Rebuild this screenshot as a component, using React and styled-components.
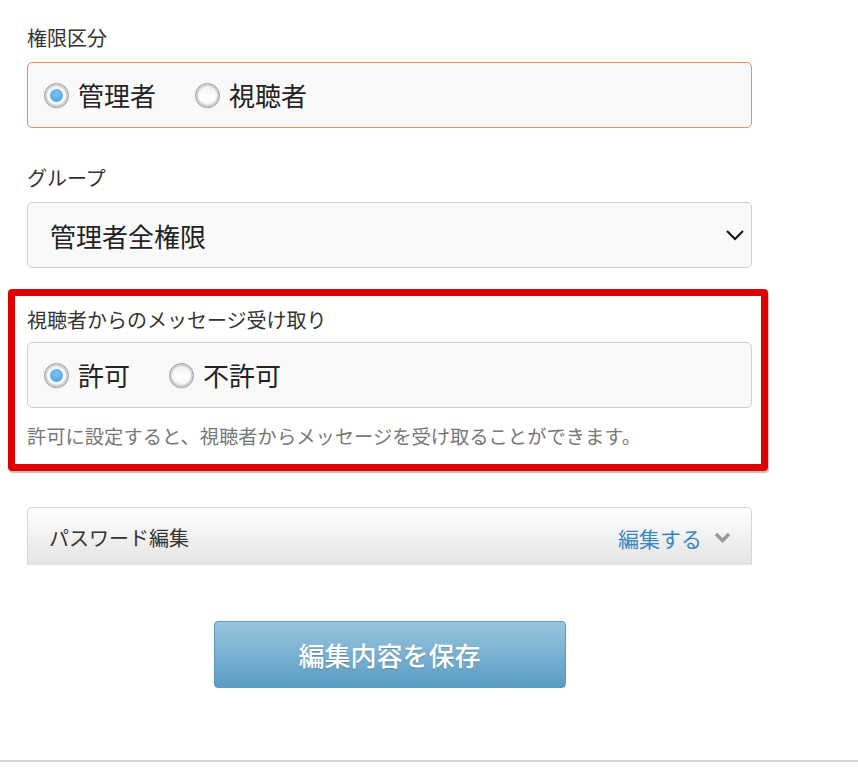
import React, { useState } from 'react';
import styled, { createGlobalStyle } from 'styled-components';

const GlobalStyle = createGlobalStyle`
  body {
    margin: 0;
    background: #fff;
    font-family: "Noto Sans CJK JP", "Noto Sans", sans-serif;
  }
`;

const Page = styled.div`
  width: 100%;
  border-bottom: 2px solid #d6d6d6;
`;

const Form = styled.div`
  width: 725px;
  margin-left: 27px;
  padding: 26px 0 72px;
`;

const Label = styled.div`
  font-size: 20px;
  line-height: 24px;
  color: #333;
  margin-top: ${props => props.top || 0}px;
  margin-bottom: ${props => props.gap || 12}px;
`;

const OptionBox = styled.div`
  box-sizing: border-box;
  height: 66px;
  display: flex;
  align-items: center;
  gap: 39px;
  padding-left: 16px;
  background: #f9f9f9;
  border: 1px solid ${props => props.accent ? '#f08c52' : '#cfcfcf'};
  border-radius: 5px;
`;

const Option = styled.label`
  display: flex;
  align-items: center;
  gap: 9px;
  font-size: 26px;
  line-height: 30px;
  color: #222;
  cursor: pointer;
`;

const RadioCircle = styled.span`
  box-sizing: border-box;
  width: 25px;
  height: 25px;
  border-radius: 50%;
  border: 1px solid #9c9c9c;
  background: linear-gradient(#ececec, #ffffff 55%, #f4f4f4);
  box-shadow: inset 0 0 0 2px #d4d4d4, inset 0 -2px 3px rgba(0, 0, 0, 0.12), 0 1px 1px rgba(0, 0, 0, 0.08);
  display: flex;
  align-items: center;
  justify-content: center;

  &::after {
    content: '';
    width: 13px;
    height: 13px;
    border-radius: 50%;
    background: radial-gradient(circle at 50% 35%, #7cc3f2, #3b9ee2);
    display: ${props => props.checked ? 'block' : 'none'};
  }
`;

const Select = styled.div`
  box-sizing: border-box;
  height: 66px;
  display: flex;
  align-items: center;
  justify-content: space-between;
  padding: 0 6px 0 22px;
  background: #f9f9f9;
  border: 1px solid #cfcfcf;
  border-radius: 5px;
  font-size: 26px;
  color: #222;
`;

const Highlight = styled.section`
  margin: 21px -16px 0 -19px;
  padding: 12px 9px 16px 12px;
  border: 7px solid #e00000;
  border-radius: 4px;
  box-shadow: 1px 2px 1px rgba(0, 0, 0, 0.25);
`;

const Help = styled.p`
  margin: 16px 0 0;
  font-size: 19.3px;
  line-height: 24px;
  color: #777;
`;

const Accordion = styled.div`
  box-sizing: border-box;
  height: 58px;
  margin-top: 36px;
  display: flex;
  align-items: center;
  justify-content: space-between;
  padding: 2px 20px 0 21px;
  background: linear-gradient(#ffffff, #e4e4e4);
  border: 1px solid #d6d6d6;
  border-bottom: none;
  border-radius: 5px 5px 0 0;
`;

const AccordionTitle = styled.span`
  font-size: 20px;
  color: #333;
`;

const EditLink = styled.span`
  display: flex;
  align-items: center;
  gap: 12px;
  font-size: 21px;
  color: #3a86c4;
`;

const ButtonRow = styled.div`
  display: flex;
  justify-content: center;
  margin-top: 56px;
`;

const SaveButton = styled.button`
  box-sizing: border-box;
  width: 352px;
  height: 67px;
  border: 1px solid #5a98c1;
  border-radius: 4px;
  background: linear-gradient(#98c6de, #5a9bc4);
  color: #fff;
  font-family: inherit;
  font-size: 26px;
  font-weight: 500;
  text-shadow: 0 1px 1px rgba(0, 0, 0, 0.2);
  cursor: pointer;
`;

const RadioGroup = ({ options, value, onChange, accent }) => (
  <OptionBox accent={accent}>
    {options.map(opt => (
      <Option key={opt} onClick={() => onChange(opt)}>
        <RadioCircle checked={value === opt} />
        {opt}
      </Option>
    ))}
  </OptionBox>
);

const App = () => {
  // role and message permission state
  const [role, setRole] = useState('管理者');
  const [allow, setAllow] = useState('許可');

  return (
    <>
      <GlobalStyle />
      <Page>
        <Form>
          <Label>権限区分</Label>
          <RadioGroup accent options={['管理者', '視聴者']} value={role} onChange={setRole} />

          <Label top={38}>グループ</Label>
          <Select>
            管理者全権限
            <svg width="20" height="12" viewBox="0 0 20 12">
              <path d="M2 2 L10 10 L18 2" fill="none" stroke="#111" strokeWidth="2" />
            </svg>
          </Select>

          <Highlight>
            <Label gap={10}>視聴者からのメッセージ受け取り</Label>
            <RadioGroup options={['許可', '不許可']} value={allow} onChange={setAllow} />
            <Help>許可に設定すると、視聴者からメッセージを受け取ることができます。</Help>
          </Highlight>

          <Accordion>
            <AccordionTitle>パスワード編集</AccordionTitle>
            <EditLink>
              編集する
              <svg width="17" height="11" viewBox="0 0 17 11">
                <path d="M2 2 L8.5 8.5 L15 2" fill="none" stroke="#9a9a9a" strokeWidth="3.5" />
              </svg>
            </EditLink>
          </Accordion>

          <ButtonRow>
            <SaveButton>編集内容を保存</SaveButton>
          </ButtonRow>
        </Form>
      </Page>
    </>
  );
};

export default App;
